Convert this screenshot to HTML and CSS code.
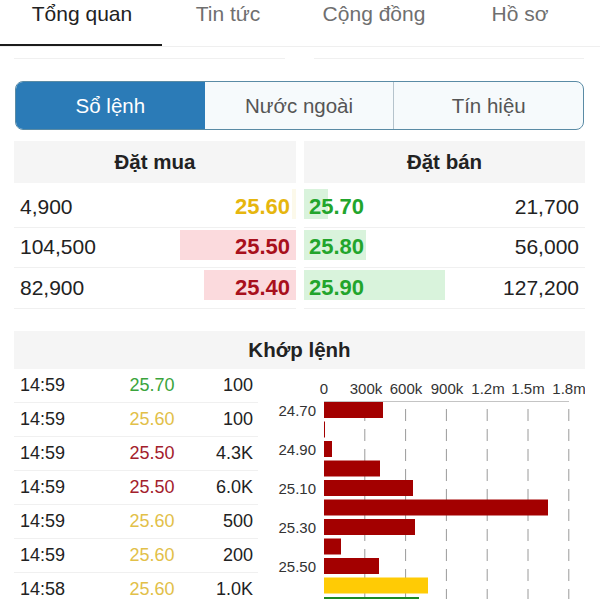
FILE: index.html
```html
<!DOCTYPE html>
<html lang="vi">
<head>
    <meta charset="UTF-8">
    <meta name="viewport" content="width=device-width, initial-scale=1.0">
    <title>Sổ lệnh</title>
    <link rel="stylesheet" href="styles.css">
</head>
<body>
    <div class="tabs">
        <div class="tab active">Tổng quan</div>
        <div class="tab">Tin tức</div>
        <div class="tab">Cộng đồng</div>
        <div class="tab">Hồ sơ</div>
    </div>
    <div class="stub"><span></span><span></span></div>

    <div class="segment">
        <div class="seg active">Sổ lệnh</div>
        <div class="seg">Nước ngoài</div>
        <div class="seg">Tín hiệu</div>
    </div>

    <div class="book">
        <div class="side buy">
            <div class="book-head">Đặt mua</div>
            <div class="book-row"><span class="vol">4,900</span><span class="price ref" style="--w: 4px">25.60</span></div>
            <div class="book-row"><span class="vol">104,500</span><span class="price down" style="--w: 116px">25.50</span></div>
            <div class="book-row"><span class="vol">82,900</span><span class="price down" style="--w: 92px">25.40</span></div>
        </div>
        <div class="side sell">
            <div class="book-head">Đặt bán</div>
            <div class="book-row"><span class="price up" style="--w: 24px">25.70</span><span class="vol">21,700</span></div>
            <div class="book-row"><span class="price up" style="--w: 62px">25.80</span><span class="vol">56,000</span></div>
            <div class="book-row"><span class="price up" style="--w: 141px">25.90</span><span class="vol">127,200</span></div>
        </div>
    </div>

    <div class="match">
        <div class="match-head">Khớp lệnh</div>
        <div class="match-body">
            <div class="trades">
                <div class="trade"><span>14:59</span><span class="up">25.70</span><span class="qty">100</span></div>
                <div class="trade"><span>14:59</span><span class="ref">25.60</span><span class="qty">100</span></div>
                <div class="trade"><span>14:59</span><span class="down">25.50</span><span class="qty">4.3K</span></div>
                <div class="trade"><span>14:59</span><span class="down">25.50</span><span class="qty">6.0K</span></div>
                <div class="trade"><span>14:59</span><span class="ref">25.60</span><span class="qty">500</span></div>
                <div class="trade"><span>14:59</span><span class="ref">25.60</span><span class="qty">200</span></div>
                <div class="trade"><span>14:58</span><span class="ref">25.60</span><span class="qty">1.0K</span></div>
            </div>

            <!-- volume by price -->
            <svg class="chart" width="327" height="230" viewBox="0 0 327 230">
                <g class="axis-labels" text-anchor="middle">
                    <text x="66" y="25">0</text>
                    <text x="108" y="25">300k</text>
                    <text x="148" y="25">600k</text>
                    <text x="189" y="25">900k</text>
                    <text x="230" y="25">1.2m</text>
                    <text x="270" y="25">1.5m</text>
                    <text x="311" y="25">1.8m</text>
                </g>
                <g class="grid">
                    <line x1="106.8" y1="32" x2="106.8" y2="230"/>
                    <line x1="147.6" y1="32" x2="147.6" y2="230"/>
                    <line x1="188.4" y1="32" x2="188.4" y2="230"/>
                    <line x1="229.2" y1="32" x2="229.2" y2="230"/>
                    <line x1="270" y1="32" x2="270" y2="230"/>
                    <line x1="310.8" y1="32" x2="310.8" y2="230"/>
                </g>
                <line class="axis" x1="66" y1="32.5" x2="311" y2="32.5"/>
                <g class="bars-down">
                    <rect x="66" y="33" width="59" height="16"/>
                    <rect x="66" y="52.5" width="1" height="16"/>
                    <rect x="66" y="72" width="8" height="16"/>
                    <rect x="66" y="91.5" width="56" height="16"/>
                    <rect x="66" y="111" width="89" height="16"/>
                    <rect x="66" y="130.5" width="224" height="16"/>
                    <rect x="66" y="150" width="91" height="16"/>
                    <rect x="66" y="169.5" width="17" height="16"/>
                    <rect x="66" y="189" width="55" height="16"/>
                </g>
                <rect class="bar-ref" x="66" y="208.5" width="104" height="16"/>
                <rect class="bar-up" x="66" y="228" width="95" height="16"/>
                <g class="price-labels" text-anchor="end">
                    <text x="58" y="47">24.70</text>
                    <text x="58" y="86">24.90</text>
                    <text x="58" y="125">25.10</text>
                    <text x="58" y="164">25.30</text>
                    <text x="58" y="203">25.50</text>
                </g>
            </svg>
        </div>
    </div>
</body>
</html>
```

FILE: styles.css
```css
body {
    margin: 0;
    width: 600px;
    height: 600px;
    overflow: hidden;
    background: #fff;
    color: #222;
    font-family: "Liberation Sans", Arial, sans-serif;
}

/* top tabs */
.tabs {
    display: flex;
    height: 46px;
    padding-left: 9px;
    border-bottom: 1px solid #efefef;
}
.tab {
    position: relative;
    width: 146px;
    text-align: center;
    font-size: 21px;
    line-height: 28px;
    color: #6f6f6f;
}
.tab.active {
    color: #222;
}
.tab.active::after {
    content: "";
    position: absolute;
    left: -9px;
    right: -7px;
    bottom: 0;
    height: 2px;
    background: #1c1c1c;
}
.stub {
    display: grid;
    grid-template-columns: 271px 270px;
    gap: 29px;
    height: 12px;
    margin: 0 16px 0 14px;
}
.stub span {
    border-bottom: 1px solid #f0f0f0;
}

/* segmented control */
.segment {
    display: flex;
    height: 49px;
    margin: 22px 16px 0 15px;
    border: 1.5px solid #5a8ba5;
    border-radius: 8px;
    overflow: hidden;
    box-sizing: border-box;
    background: #f6fafc;
}
.seg {
    flex: 1;
    display: flex;
    align-items: center;
    justify-content: center;
    font-size: 20.5px;
    color: #555;
}
.seg + .seg {
    border-left: 1px solid #b5c3cc;
}
.seg.active {
    background: #2b7bb7;
    color: #fff;
}
.seg.active + .seg {
    border-left: none;
}

/* order book */
.book {
    display: grid;
    grid-template-columns: 282px 281px;
    gap: 8px;
    margin: 11px 15px 0 14px;
}
.book-head {
    height: 42px;
    line-height: 42px;
    margin-bottom: 4px;
    background: #f5f5f5;
    text-align: center;
    font-size: 20.5px;
    font-weight: bold;
}
.book-row {
    display: flex;
    height: 40.5px;
    border-bottom: 1px solid #f0f0f0;
    box-sizing: border-box;
    font-size: 21px;
}
.vol {
    display: flex;
    align-items: center;
}
.price {
    flex: 1;
    display: flex;
    align-items: center;
    font-size: 22px;
    font-weight: bold;
}
.buy .vol {
    padding-left: 6px;
}
.buy .price {
    justify-content: flex-end;
    padding-right: 6px;
    background: linear-gradient(var(--bar), var(--bar)) right 2px / var(--w) 30px no-repeat;
}
.sell .vol {
    padding-right: 6px;
}
.sell .price {
    padding-left: 5px;
    background: linear-gradient(var(--bar), var(--bar)) left 2px / var(--w) 30px no-repeat;
}
.price.up {
    --bar: #d9f3dc;
}
.price.down {
    --bar: #fbdadd;
}
.price.ref {
    --bar: #fcf9ea;
}
.up {
    color: #22a52c;
}
.down {
    color: #a8101c;
}
.ref {
    color: #e6b60e;
}

/* matched trades */
.match {
    margin: 22.5px 15px 0 14px;
}
.match-head {
    height: 38px;
    line-height: 38px;
    background: #f5f5f5;
    text-align: center;
    font-size: 20.5px;
    font-weight: bold;
}
.match-body {
    display: flex;
}
.trades {
    width: 244px;
}
.trade {
    display: grid;
    grid-template-columns: 84px 96px 1fr;
    align-items: center;
    height: 34px;
    padding: 0 5px 0 6px;
    border-bottom: 1px solid #f0f0f0;
    box-sizing: border-box;
    font-size: 18px;
}
.trade span:nth-child(2) {
    text-align: center;
}
.trade .up {
    color: #3aa43c;
}
.trade .ref {
    color: #e2c048;
}
.trade .down {
    color: #a3202c;
}
.trade .qty {
    text-align: right;
}

.chart {
    display: block;
    flex: none;
    font-family: "Liberation Sans", Arial, sans-serif;
    font-size: 15px;
}
.chart text {
    fill: #333;
}
.chart .grid line {
    stroke: #9a9a9a;
    stroke-width: 1;
    stroke-dasharray: 12 8;
    stroke-dashoffset: -8;
}
.chart .axis {
    stroke: #c4c4c4;
    stroke-width: 1;
}
.bars-down rect {
    fill: #a30000;
}
.bar-ref {
    fill: #ffcb05;
}
.bar-up {
    fill: #1d8a23;
}
```
